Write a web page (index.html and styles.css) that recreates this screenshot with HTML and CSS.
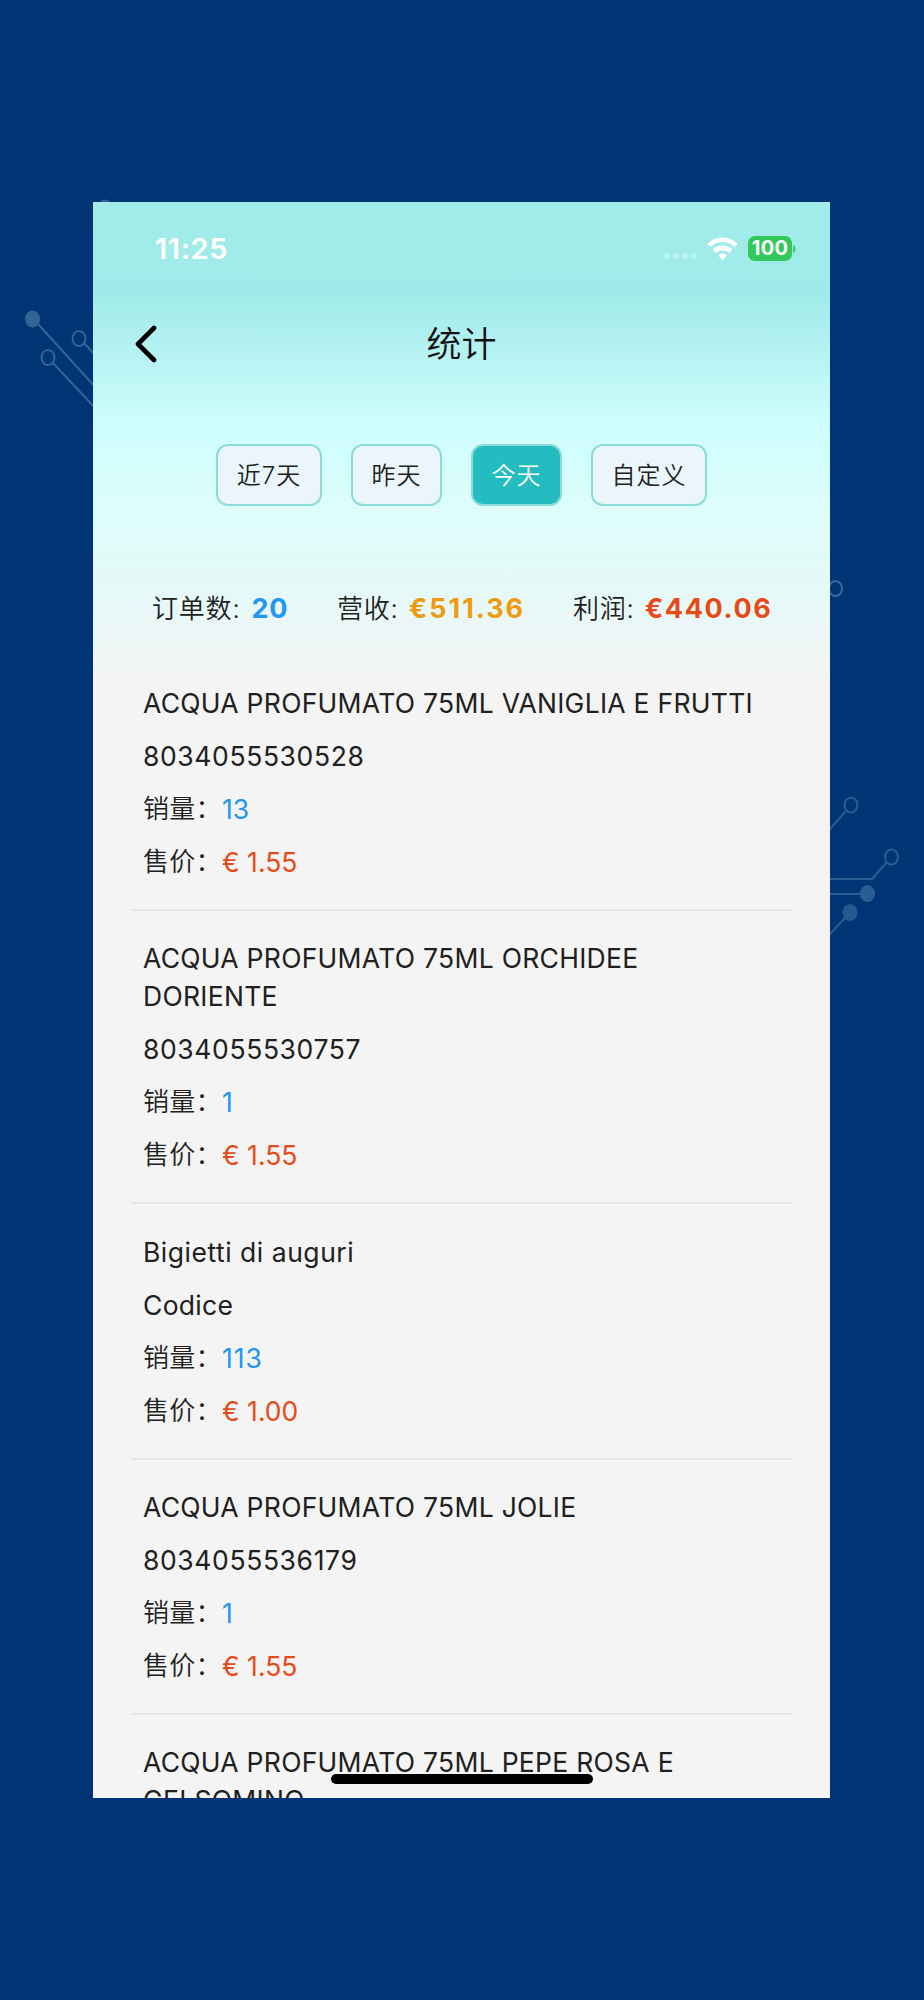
FILE: index.html
```html
<!DOCTYPE html>
<html lang="zh">
<head>
<meta charset="utf-8">
<title>统计</title>
<link rel="stylesheet" href="styles.css">
</head>
<body>
<div class="stage">
  <svg class="circuit" width="924" height="2000" viewBox="0 0 924 2000" fill="none" stroke-width="2">
    <g stroke="#336496">
      <path d="M38 324L97 389M53 363L97 410M84 343L97 357"/>
      <ellipse cx="48" cy="357.500" rx="6.500" ry="7.500"/>
      <ellipse cx="79" cy="338.500" rx="6.500" ry="7.500"/>
      <ellipse cx="32.500" cy="319" rx="6.500" ry="7.500" fill="#336496"/>
      <ellipse cx="105" cy="208" rx="6.500" ry="7.500" fill="#336496"/>
      <ellipse cx="835.500" cy="588.500" rx="6.500" ry="7.500" stroke="#3d6b9c"/>
    </g>
    <g stroke="#2a5d93">
      <path d="M829 830L846 811M829 879H872L887 862M829 894H862M829 935L846 917"/>
      <ellipse cx="851" cy="805" rx="6.500" ry="7.500"/>
      <ellipse cx="891.500" cy="857" rx="6.500" ry="7.500"/>
      <ellipse cx="867.500" cy="893.500" rx="6.500" ry="7.500" fill="#2a5d93"/>
      <ellipse cx="850" cy="912.500" rx="6.500" ry="7.500" fill="#215b92" stroke="#215b92"/>
    </g>
  </svg>
  <main class="phone">
    <div class="status">
      <span class="clock">11:25</span>
      <div class="indicators">
        <svg class="dots" width="33" height="6" viewBox="0 0 33 6" fill="#b9f2f0"><circle cx="3" cy="3" r="3"/><circle cx="12" cy="3" r="3"/><circle cx="21" cy="3" r="3"/><circle cx="30" cy="3" r="3"/></svg>
        <svg class="wifi" width="31" height="23" viewBox="0 0 31 23" fill="none" stroke="#fff" stroke-width="4.600"><path d="M2 8.500C9.500 .8 21.500 .8 29 8.500"/><path d="M7.200 14.200C12 9.700 19 9.700 23.800 14.200"/><path d="M15.500 23L11 18.300C13.500 16 17.500 16 20 18.300Z" fill="#fff" stroke="none"/></svg>
        <span class="battery">100</span>
        <svg class="cap" width="3" height="8" viewBox="0 0 3 8" fill="#41cc70"><path d="M0 0C3.500 1 3.500 7 0 8Z"/></svg>
      </div>
    </div>
    <header class="nav">
      <svg class="back" width="24" height="40" viewBox="0 0 24 40" fill="none" stroke="#000" stroke-width="4.600" stroke-linecap="round" stroke-linejoin="round"><path d="M21 4L5 20L21 36"/></svg>
      <h1 class="title">统计</h1>
      <span class="balance"></span>
    </header>
    <div class="tabs">
      <span class="tab week">近7天</span><span class="tab">昨天</span><span class="tab active">今天</span><span class="tab custom">自定义</span>
    </div>
    <div class="stats">
      <div class="stat orders"><span>订单数:</span><b class="blue">20</b></div>
      <div class="stat revenue"><span>营收:</span><b class="amber">€511.36</b></div>
      <div class="stat profit"><span>利润:</span><b class="red">€440.06</b></div>
    </div>
    <section class="list">
      <article class="item">
        <div class="name">ACQUA PROFUMATO 75ML VANIGLIA E FRUTTI</div>
        <div class="code">8034055530528</div>
        <div class="row"><span class="label">销量：</span><span class="blue">13</span></div>
        <div class="row"><span class="label">售价：</span><span class="red">€ 1.55</span></div>
      </article>
      <article class="item">
        <div class="name">ACQUA PROFUMATO 75ML ORCHIDEE<br>DORIENTE</div>
        <div class="code">8034055530757</div>
        <div class="row"><span class="label">销量：</span><span class="blue">1</span></div>
        <div class="row"><span class="label">售价：</span><span class="red">€ 1.55</span></div>
      </article>
      <article class="item">
        <div class="name mixed">Bigietti di auguri</div>
        <div class="name">Codice</div>
        <div class="row"><span class="label">销量：</span><span class="blue wide">113</span></div>
        <div class="row"><span class="label">售价：</span><span class="red">€ 1.00</span></div>
      </article>
      <article class="item">
        <div class="name">ACQUA PROFUMATO 75ML JOLIE</div>
        <div class="code">8034055536179</div>
        <div class="row"><span class="label">销量：</span><span class="blue">1</span></div>
        <div class="row"><span class="label">售价：</span><span class="red">€ 1.55</span></div>
      </article>
      <article class="item">
        <div class="name">ACQUA PROFUMATO 75ML PEPE ROSA E<br>GELSOMINO</div>
      </article>
    </section>
    <div class="home-bar"></div>
  </main>
</div>
</body>
</html>
```
FILE: styles.css
```css
* { box-sizing: border-box; }
body { margin: 0; background: #003474; }
.stage {
  position: relative;
  width: 924px;
  height: 2000px;
  padding: 202px 94px 0 93px;
  overflow: hidden;
  background: #003474;
  font-family: Inter, "Noto Sans CJK SC", sans-serif;
  color: #202020;
}
.circuit { position: absolute; left: 0; top: 0; }
.phone {
  position: relative;
  height: 1596px;
  overflow: hidden;
  background: linear-gradient(#a1ece9 0, #a0ebe9 95px, #aeefef 130px, #cffdfd 220px, #d2fefd 255px, #ddfdfb 305px, #e5f9f8 390px, #eef6f6 440px, #f4f4f4 478px);
}
.status {
  display: flex;
  justify-content: space-between;
  align-items: center;
  height: 94px;
  padding: 0 34px 0 62px;
}
.clock { margin-top: -1px; color: #fff; font-size: 29px; font-weight: 600; letter-spacing: .6px; }
.indicators { display: flex; align-items: center; }
.dots { margin: 14px 10px 0 0; }
.wifi { margin: -2px 10px 0 0; }
.battery {
  width: 44px;
  height: 25px;
  margin-top: -1px;
  border-radius: 7px;
  background: #34c759;
  color: #fff;
  font: 700 20px/25px Inter, sans-serif;
  letter-spacing: .3px;
  text-align: center;
}
.cap { margin: -1px 0 0 1px; }
.nav {
  display: flex;
  justify-content: space-between;
  align-items: center;
  height: 96px;
  padding: 0 40px;
}
.title { margin: 0; font-size: 35px; font-weight: 350; line-height: 50px; color: #111; }
.balance { width: 24px; }
.tabs { display: flex; gap: 29px; padding: 52px 0 0 123px; }
.tab {
  width: 91px;
  height: 62px;
  border: 2px solid #8adbd9;
  border-radius: 12px;
  background: #eaf6fc;
  font-size: 24px;
  font-weight: 350;
  line-height: 59px;
  letter-spacing: 1px;
  text-align: center;
}
.week { width: 106px; }
.custom { width: 116px; }
.active { background: #24bcc0; color: #fff; }
.stats { display: flex; height: 76px; margin-top: 65px; padding-left: 59px; line-height: 76px; }
.stat { display: flex; gap: 10px; font-size: 26px; font-weight: 350; letter-spacing: .8px; white-space: nowrap; }
.stat b { font-size: 27px; font-weight: 650; }
.orders { width: 185px; }
.orders b { margin-left: 1px; }
.revenue { width: 236px; }
.revenue b { letter-spacing: 2px; }
.profit b { letter-spacing: 1.600px; }
.blue { color: #2196f3; }
.amber { color: #ee9b10; }
.red { color: #e64a19; }
.list { padding: 8.700px 37px 0 38px; }
.item {
  display: flex;
  flex-direction: column;
  gap: 15px;
  padding: 28.200px 0 28.200px 12px;
  border-bottom: 2px solid #e7e7e7;
  font-size: 26.500px;
  font-weight: 400;
  line-height: 38px;
  white-space: nowrap;
}
.name { letter-spacing: .28px; }
.mixed { letter-spacing: .52px; }
.code { letter-spacing: .62px; }
.row { display: flex; height: 38px; }
.label { width: 79px; font-size: 26px; font-weight: 350; letter-spacing: .3px; }
.wide { letter-spacing: 1px; }
.home-bar {
  position: absolute;
  left: 238px;
  top: 1572px;
  width: 262px;
  height: 10px;
  border-radius: 5px;
  background: #000;
}
```
